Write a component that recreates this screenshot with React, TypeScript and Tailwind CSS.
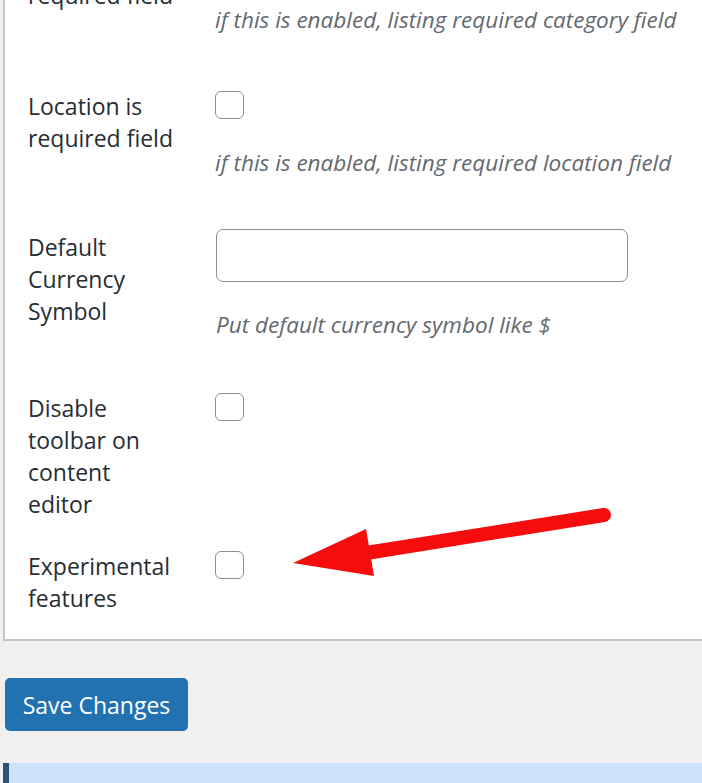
import React from "react";

const labelCls =
  "w-[210px] shrink-0 pl-[23px] text-[23px] leading-[32px] text-[#272d33] whitespace-nowrap";
const descCls =
  "italic text-[22.5px] leading-[32px] text-[#646970] whitespace-nowrap";

function Checkbox() {
  return (
    <div className="mt-[1px] w-[29px] h-[28px] border-[1.5px] border-[#8c8f94] rounded-[6px] bg-white" />
  );
}

function CheckRow({
  lines,
  desc,
  className = "",
}: {
  lines: string[];
  desc?: string;
  className?: string;
}) {
  return (
    <div className={"flex " + className}>
      <div className={labelCls}>
        {lines.map((l, i) => (
          <div key={i}>{l}</div>
        ))}
      </div>
      <div className="flex flex-col">
        <Checkbox />
        {desc && <p className={"mt-[28px] " + descCls}>{desc}</p>}
      </div>
    </div>
  );
}

export default function App() {
  return (
    <div className="relative w-[702px] h-[783px] overflow-hidden bg-[#f0f0f1] font-['Open_Sans','Noto_Sans',sans-serif]">
      <div className="ml-[3px] w-[760px] bg-white border-l-2 border-b-2 border-[#c3c4c7] pb-[25px]">
        <CheckRow
          className="-mt-[53px]"
          lines={["Category is", "required field"]}
          desc="if this is enabled, listing required category field"
        />
        <CheckRow
          className="mt-[54px]"
          lines={["Location is", "required field"]}
          desc="if this is enabled, listing required location field"
        />
        <div className="flex mt-[52px]">
          <div className={labelCls}>
            <div>Default</div>
            <div>Currency</div>
            <div>Symbol</div>
          </div>
          <div className="flex flex-col -mt-[2px] pl-[1px]">
            <div className="w-[412px] h-[53px] border-[1.5px] border-[#8c8f94] rounded-[7px] bg-white" />
            <p className={"mt-[27px] " + descCls}>
              Put default currency symbol like $
            </p>
          </div>
        </div>
        <CheckRow
          className="mt-[51px]"
          lines={["Disable", "toolbar on", "content", "editor"]}
        />
        <CheckRow className="mt-[30px]" lines={["Experimental", "features"]} />
      </div>

      <button className="mt-[37px] ml-[5px] w-[183px] h-[53px] rounded-[5px] bg-[#2271b1] text-white text-[23px] leading-[32px] flex items-center justify-center">
        Save Changes
      </button>

      <div className="mt-[32px] ml-[3px] h-[40px] bg-[#cce4fa] border-l-[6px] border-[#2d5278]" />

      <svg
        className="absolute left-0 top-0 pointer-events-none"
        width="702"
        height="783"
        viewBox="0 0 702 783"
      >
        <line
          x1="604"
          y1="515"
          x2="360"
          y2="554"
          stroke="#f50c0c"
          strokeWidth="14"
          strokeLinecap="round"
        />
        <polygon points="293,563 366,529 374,576" fill="#f50c0c" />
      </svg>
    </div>
  );
}
